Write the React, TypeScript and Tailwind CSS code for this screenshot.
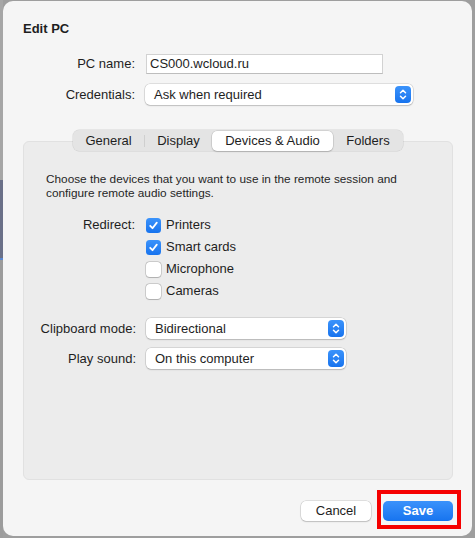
import React from "react";

function Stepper() {
  return (
    <div className="w-[16px] h-[17px] rounded-[4px] bg-gradient-to-b from-[#3b93fb] to-[#1673ee] flex items-center justify-center">
      <svg width="10" height="13" viewBox="0 0 10 13" fill="none">
        <path d="M2.5 4.8 L5 2.3 L7.5 4.8" stroke="white" strokeWidth="1.5" strokeLinecap="round" strokeLinejoin="round" />
        <path d="M2.5 8.2 L5 10.7 L7.5 8.2" stroke="white" strokeWidth="1.5" strokeLinecap="round" strokeLinejoin="round" />
      </svg>
    </div>
  );
}

function Select({ value, width }: { value: string; width: string }) {
  return (
    <div
      className={`${width} h-[21px] bg-white rounded-[5px] shadow-[0_0_0_0.5px_rgba(0,0,0,0.18),0_1px_1.5px_rgba(0,0,0,0.15)] flex items-center justify-between pl-[9px] pr-[2px]`}
    >
      <span className="text-[13px] text-[#1e1e1e] leading-none">{value}</span>
      <Stepper />
    </div>
  );
}

function Checkbox({ checked, label }: { checked: boolean; label: string }) {
  return (
    <div className="h-[22px] flex items-center">
      {checked ? (
        <div className="w-[15px] h-[15px] rounded-[3.5px] bg-gradient-to-b from-[#3b93fb] to-[#1673ee] flex items-center justify-center">
          <svg width="11" height="11" viewBox="0 0 11 11" fill="none">
            <path d="M2.2 5.8 L4.5 8.2 L8.8 2.6" stroke="white" strokeWidth="1.8" strokeLinecap="round" strokeLinejoin="round" />
          </svg>
        </div>
      ) : (
        <div className="w-[15px] h-[15px] rounded-[3.5px] bg-white shadow-[0_0_0_0.5px_rgba(0,0,0,0.25),0_0.5px_1px_rgba(0,0,0,0.15)]" />
      )}
      <span className="ml-[5px] text-[13px] text-[#1e1e1e]">{label}</span>
    </div>
  );
}

export default function App() {
  return (
    <div
      className="w-[475px] h-[538px] bg-[#9e9e9e] flex overflow-hidden"
      style={{ fontFamily: '"Liberation Sans", Arial, sans-serif' }}
    >
      <div className="w-[3px] flex flex-col shrink-0">
        <div className="h-[180px] bg-[#a6a6a6]" />
        <div className="h-[78px] bg-[#6a7088]" />
        <div className="h-[2px] bg-[#5a88d0]" />
        <div className="flex-1 bg-[#9c9c9c]" />
      </div>
      <div className="pt-[1px]">
        <div className="w-[469px] h-[535px] bg-[#f5f5f5] rounded-[10px] flex flex-col pt-[20px]">
          <div className="pl-[20px] text-[13px] font-bold text-[#1e1e1e] leading-[16px]">Edit PC</div>

          {/* PC name */}
          <div className="flex items-center mt-[17px] h-[20px]">
            <div className="w-[132px] text-right text-[13px] text-[#1e1e1e]">PC name:</div>
            <div className="ml-[11px] w-[237px] h-[20px] bg-white border border-[#d2d2d2] border-b-[#bdbdbd] flex items-center pl-[3px]">
              <span className="text-[13px] text-[#1e1e1e]">CS000.wcloud.ru</span>
            </div>
          </div>

          {/* Credentials */}
          <div className="flex items-center mt-[10px] h-[21px]">
            <div className="w-[132px] text-right text-[13px] text-[#1e1e1e]">Credentials:</div>
            <div className="ml-[10px]">
              <Select value="Ask when required" width="w-[268px]" />
            </div>
          </div>

          {/* Tabs + box */}
          <div className="mt-[25px] flex flex-col items-center ml-[20px] w-[430px]">
            <div className="relative z-10 h-[21px] flex items-center bg-[#e4e4e4] rounded-[6px] shadow-[0_0_0_0.5px_rgba(0,0,0,0.12)] text-[13px] text-[#1e1e1e]">
              <div className="w-[71px] h-full flex items-center justify-center">General</div>
              <div className="w-px h-[12px] bg-[#cfcfcf]" />
              <div className="w-[67px] h-full flex items-center justify-center">Display</div>
              <div className="w-[121px] h-[20px] flex items-center justify-center bg-white rounded-[5px] shadow-[0_0_0_0.5px_rgba(0,0,0,0.15),0_1px_1.5px_rgba(0,0,0,0.15)]">
                Devices &amp; Audio
              </div>
              <div className="w-[70px] h-full flex items-center justify-center">Folders</div>
            </div>
            <div className="-mt-[10px] w-[430px] h-[339px] bg-[#ececec] border border-[#e1e1e1] rounded-[6px] pt-[30px]">
              <div className="pl-[22px] text-[11.8px] leading-[14px] text-[#262626]">
                Choose the devices that you want to use in the remote session and
                <br />
                configure remote audio settings.
              </div>

              <div className="flex mt-[14px]">
                <div className="w-[111px] text-right text-[13px] text-[#1e1e1e] h-[22px] flex items-center justify-end">
                  Redirect:
                </div>
                <div className="ml-[11px] flex flex-col">
                  <Checkbox checked label="Printers" />
                  <Checkbox checked label="Smart cards" />
                  <Checkbox checked={false} label="Microphone" />
                  <Checkbox checked={false} label="Cameras" />
                </div>
              </div>

              <div className="flex items-center mt-[16px] h-[21px]">
                <div className="w-[112px] text-right text-[13px] text-[#1e1e1e]">Clipboard mode:</div>
                <div className="ml-[10px]">
                  <Select value="Bidirectional" width="w-[200px]" />
                </div>
              </div>
              <div className="flex items-center mt-[9px] h-[21px]">
                <div className="w-[112px] text-right text-[13px] text-[#1e1e1e]">Play sound:</div>
                <div className="ml-[10px]">
                  <Select value="On this computer" width="w-[200px]" />
                </div>
              </div>
            </div>
          </div>

          {/* Buttons */}
          <div className="mt-[10px] flex justify-end items-start pr-[11px]">
            <div className="mt-[11px] w-[70px] h-[20px] bg-white rounded-[5px] shadow-[0_0_0_0.5px_rgba(0,0,0,0.18),0_1px_1.5px_rgba(0,0,0,0.15)] flex items-center justify-center text-[13px] text-[#1e1e1e]">
              Cancel
            </div>
            <div className="ml-[6px] border-[4px] border-[#f50000] pl-[2px] pr-[4px] pt-[7px] pb-[4px]">
              <div className="w-[70px] h-[20px] rounded-[5px] bg-gradient-to-b from-[#3a92fb] to-[#1674ef] flex items-center justify-center text-[13px] text-white font-semibold">
                Save
              </div>
            </div>
          </div>
        </div>
      </div>
    </div>
  );
}
